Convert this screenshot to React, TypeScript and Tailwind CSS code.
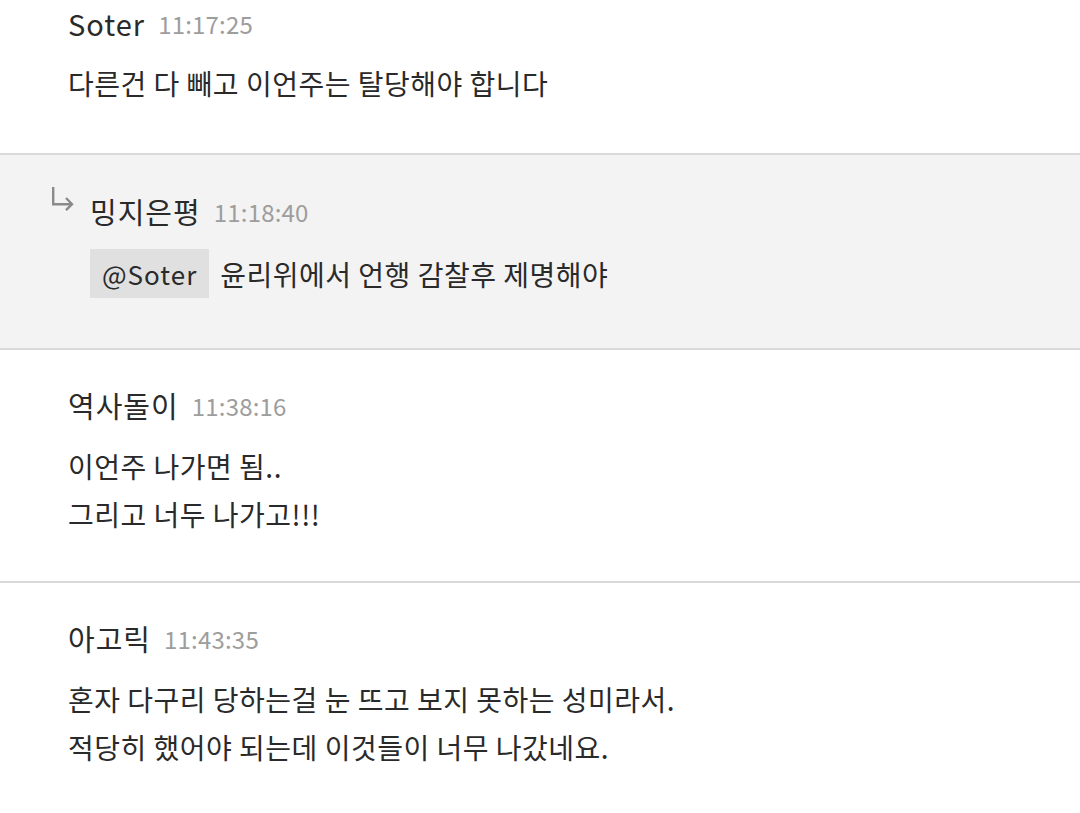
import type { FC } from "react";

type Msg = {
  name: string;
  time: string;
  lines: string[];
  reply?: boolean;
  mention?: string;
};

const messages: Msg[] = [
  { name: "Soter", time: "11:17:25", lines: ["다른건 다 빼고 이언주는 탈당해야 합니다"] },
  { name: "밍지은평", time: "11:18:40", lines: ["윤리위에서 언행 감찰후 제명해야"], reply: true, mention: "@Soter" },
  { name: "역사돌이", time: "11:38:16", lines: ["이언주 나가면 됨..", "그리고 너두 나가고!!!"] },
  { name: "아고릭", time: "11:43:35", lines: ["혼자 다구리 당하는걸 눈 뜨고 보지 못하는 성미라서.", "적당히 했어야 되는데 이것들이 너무 나갔네요."] },
];

const ReplyArrow: FC = () => (
  <svg width="24" height="26" viewBox="0 0 24 26" fill="none" stroke="#8a8a8a" strokeWidth={2.4} className="shrink-0">
    <path d="M2.2 2v17.2h18" />
    <path d="M15 13l6 6.2-6 6" />
  </svg>
);

const App: FC = () => {
  return (
    <div className="w-[1080px] h-[813px] overflow-hidden bg-white text-[#2a2a2a] font-['Noto_Sans_CJK_KR','Noto_Sans',sans-serif]">
      <div className="-mt-[31px]">
        {messages.map((m, i) => (
          <div
            key={i}
            className={
              m.reply
                ? "bg-[#f3f3f3] border-b-2 border-[#d9d9d9] pt-[39px] pb-[50px] pl-[51px] pr-8"
                : i === 0
                ? "bg-white border-b-2 border-[#d9d9d9] pt-[37px] pb-[46px] pl-[68px] pr-8"
                : "bg-white border-b-2 border-[#d9d9d9] pt-[38px] pb-[43px] pl-[68px] pr-8"
            }
          >
            <div className="flex items-center h-[34px]">
              {m.reply && (
                <div className="w-[39px] -mt-[26px]">
                  <ReplyArrow />
                </div>
              )}
              <span className="text-[29px] leading-[34px] tracking-[1px]">{m.name}</span>
              <span className="ml-[13px] text-[24px] leading-[34px] tracking-[0.2px] text-[#9d9d9d] mt-[2px]">{m.time}</span>
            </div>
            <div className={m.reply ? "mt-[21px] pl-[39px]" : i === 0 ? "mt-[19px]" : "mt-[20px]"}>
              {m.lines.map((l, j) => (
                <div key={j} className="flex items-center text-[28px] leading-[48px] tracking-[0.5px]">
                  {m.mention && j === 0 && (
                    <span className="bg-[#e0e0e0] h-[49px] px-[12px] mr-[11px] text-[26px] leading-[49px] tracking-[1px]">
                      {m.mention}
                    </span>
                  )}
                  <span>{l}</span>
                </div>
              ))}
            </div>
          </div>
        ))}
      </div>
    </div>
  );
};

export default App;
